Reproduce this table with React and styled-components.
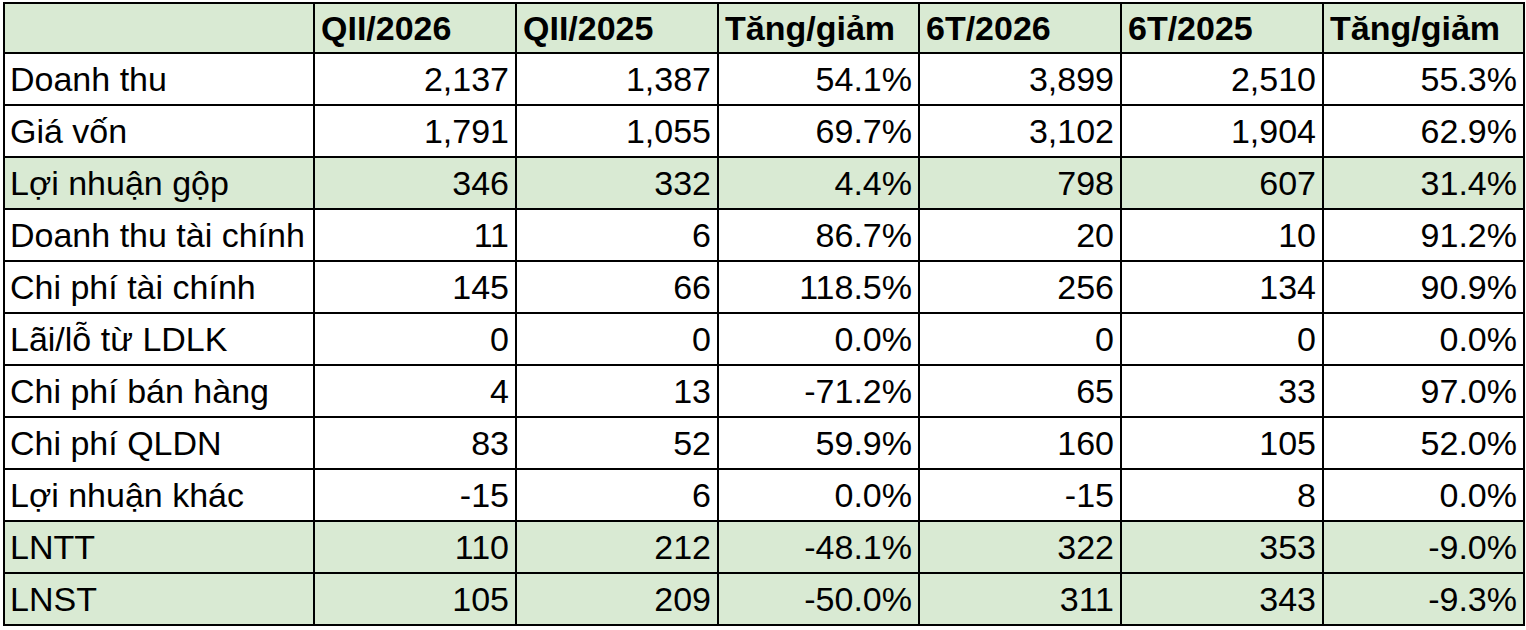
import React from "react";
import styled, { createGlobalStyle } from "styled-components";

const GlobalStyle = createGlobalStyle`
    body {
        margin: 0;
        padding: 2px 0 0 3px;
        background: #ffffff;
        font-family: "Liberation Sans", Arial, sans-serif;
    }
`;

const Grid = styled.div`
    display: inline-grid;
    grid-template-columns: 308px 200px 200px 199px 200px 200px 199px;
    grid-auto-rows: 50px;
    grid-template-rows: 48px;
    gap: 2px;
    padding: 2px;
    background: #000000;
`;

const Cell = styled.div`
    display: flex;
    align-items: center;
    justify-content: ${props => (props.$label ? "flex-start" : "flex-end")};
    padding: 0 6px 0 5px;
    background: ${props => (props.$green ? "#d9ead3" : "#ffffff")};
    color: #000000;
    font-size: 34px;
    line-height: 1;
    white-space: nowrap;
    overflow: hidden;
`;

const HeadCell = styled(Cell)`
    justify-content: flex-start;
    font-weight: 700;
    padding-left: 6px;
`;

const headers = ["", "QII/2026", "QII/2025", "Tăng/giảm", "6T/2026", "6T/2025", "Tăng/giảm"];

const rows = [
    { name: "Doanh thu", values: ["2,137", "1,387", "54.1%", "3,899", "2,510", "55.3%"] },
    { name: "Giá vốn", values: ["1,791", "1,055", "69.7%", "3,102", "1,904", "62.9%"] },
    { name: "Lợi nhuận gộp", values: ["346", "332", "4.4%", "798", "607", "31.4%"], green: true },
    { name: "Doanh thu tài chính", values: ["11", "6", "86.7%", "20", "10", "91.2%"] },
    { name: "Chi phí tài chính", values: ["145", "66", "118.5%", "256", "134", "90.9%"] },
    { name: "Lãi/lỗ từ LDLK", values: ["0", "0", "0.0%", "0", "0", "0.0%"] },
    { name: "Chi phí bán hàng", values: ["4", "13", "-71.2%", "65", "33", "97.0%"] },
    { name: "Chi phí QLDN", values: ["83", "52", "59.9%", "160", "105", "52.0%"] },
    { name: "Lợi nhuận khác", values: ["-15", "6", "0.0%", "-15", "8", "0.0%"] },
    { name: "LNTT", values: ["110", "212", "-48.1%", "322", "353", "-9.0%"], green: true },
    { name: "LNST", values: ["105", "209", "-50.0%", "311", "343", "-9.3%"], green: true }
];

export default function App() {
    return (
        <>
            <GlobalStyle />
            <Grid>
                {headers.map((h, i) => <HeadCell key={"h" + i} $green>{h}</HeadCell>)}
                {rows.map(row => (
                    <React.Fragment key={row.name}>
                        <Cell $label $green={row.green}>{row.name}</Cell>
                        {row.values.map((v, i) => <Cell key={i} $green={row.green}>{v}</Cell>)}
                    </React.Fragment>
                ))}
            </Grid>
        </>
    );
}
